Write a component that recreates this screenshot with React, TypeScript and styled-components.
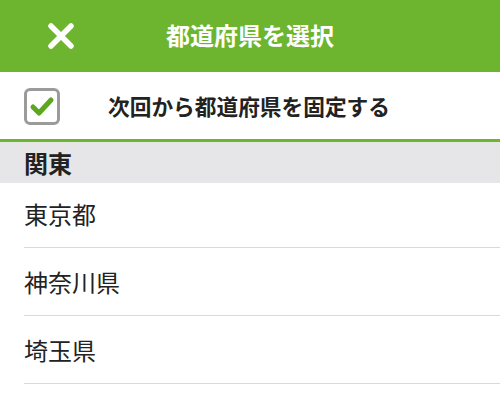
import React from "react";
import styled, { createGlobalStyle } from "styled-components";

const GlobalStyle = createGlobalStyle`
  html, body {
    margin: 0;
    padding: 0;
    background: #ffffff;
  }
  body {
    font-family: "Noto Sans CJK JP", "Noto Sans", sans-serif;
    color: #222222;
  }
`;

const Page = styled.div`
  width: 500px;
  height: 400px;
  overflow: hidden;
  display: flex;
  flex-direction: column;
`;

const Header = styled.header`
  height: 72px;
  flex-shrink: 0;
  background: #6db52e;
  display: grid;
  grid-template-columns: 120px 1fr 120px;
  align-items: center;
`;

const CloseButton = styled.button`
  width: 120px;
  height: 72px;
  padding: 0 0 0 1px;
  border: none;
  background: none;
  display: flex;
  align-items: center;
  justify-content: center;
  cursor: pointer;
`;

const Title = styled.h1`
  margin: 0 0 2px;
  text-align: center;
  color: #ffffff;
  font-size: 24px;
  font-weight: 700;
  line-height: 1;
`;

const FixRow = styled.label`
  height: 70px;
  flex-shrink: 0;
  display: flex;
  align-items: center;
  padding: 1px 0 0 24px;
  box-sizing: border-box;
  border-bottom: 3px solid #6db52e;
  cursor: pointer;
`;

const CheckBox = styled.span`
  width: 36px;
  height: 37px;
  box-sizing: border-box;
  border: 3px solid #9b9b9b;
  border-radius: 6px;
  display: flex;
  align-items: center;
  justify-content: center;
  flex-shrink: 0;
`;

const FixText = styled.span`
  margin-left: 48px;
  font-size: 21.7px;
  font-weight: 700;
  color: #222222;
  line-height: 1;
`;

const SectionHeader = styled.div`
  height: 41px;
  flex-shrink: 0;
  background: #e6e6e8;
  display: flex;
  align-items: center;
  padding-left: 24px;
  font-size: 24px;
  font-weight: 700;
  color: #222222;
`;

const List = styled.ul`
  margin: 0;
  padding: 0 0 0 24px;
  list-style: none;
`;

const Item = styled.li<{ $first?: boolean }>`
  height: ${(p) => (p.$first ? 65 : 68)}px;
  padding-bottom: ${(p) => (p.$first ? 4 : 0)}px;
  box-sizing: border-box;
  display: flex;
  align-items: center;
  border-bottom: 1.5px solid #d9d9d9;
  font-size: 24px;
  font-weight: 400;
  color: #222222;
`;

const prefectures = ["東京都", "神奈川県", "埼玉県"];

export default function App() {
  return (
    <Page>
      <GlobalStyle />
      <Header>
        <CloseButton aria-label="閉じる">
          <svg width="28" height="28" viewBox="0 0 28 28">
            <path
              d="M4 4 L24 24 M24 4 L4 24"
              stroke="#ffffff"
              strokeWidth="5.5"
              strokeLinecap="round"
              fill="none"
            />
          </svg>
        </CloseButton>
        <Title>都道府県を選択</Title>
        <span />
      </Header>
      <FixRow>
        <CheckBox>
          <svg width="26" height="22" viewBox="0 0 26 22">
            <path
              d="M4 12 L10 18 L22 5"
              stroke="#5da620"
              strokeWidth="5"
              strokeLinecap="round"
              strokeLinejoin="round"
              fill="none"
            />
          </svg>
        </CheckBox>
        <FixText>次回から都道府県を固定する</FixText>
      </FixRow>
      <SectionHeader>関東</SectionHeader>
      <List>
        {prefectures.map((name, i) => (
          <Item key={name} $first={i === 0}>
            {name}
          </Item>
        ))}
      </List>
    </Page>
  );
}
